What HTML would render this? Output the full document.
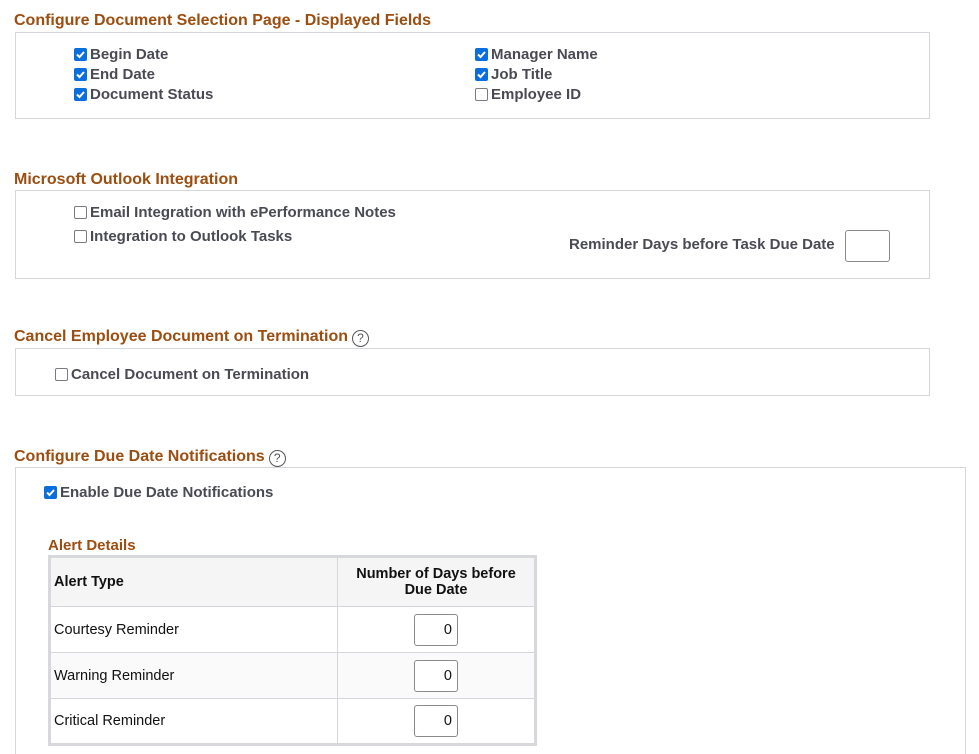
<!DOCTYPE html>
<html style="width:979px;height:754px;overflow:hidden"><head><meta charset="utf-8"><style>
*{box-sizing:border-box;margin:0;padding:0}
body{width:979px;height:754px;background:#fff;position:relative;overflow:hidden;font-family:"Liberation Sans",Arial,sans-serif}
.a{position:absolute}
.h{position:absolute;font-size:16px;font-weight:bold;color:#9c4d10;white-space:nowrap;line-height:18px}
.box{position:absolute;border:1px solid #d3d6da}
.lbl{position:absolute;font-size:15px;font-weight:bold;color:#4a4a55;white-space:nowrap;line-height:16px;padding-left:16px}
.cb{position:absolute;left:0;top:1px;width:13px;height:13px;border-radius:2px}
.on{background:#0a6fdc}
.off{border:1.5px solid #7a7a80;background:#fff}
.on svg{position:absolute;left:1px;top:1px}
.help{display:inline-block;width:17px;height:17px;border:1.3px solid #555;border-radius:50%;font-size:12px;font-weight:normal;color:#555;text-align:center;line-height:15px;vertical-align:-1px;margin-left:4px}
table{position:absolute;left:48px;top:555px;border-collapse:collapse;border:3px solid #d6d8db;width:489px}
td,th{border:1px solid #d3d6da;font-size:14.5px;color:#111;height:46px}
th{background:#f5f5f5;height:50px}
td.l{padding-left:3px;text-align:left}
.inp{display:block;margin-left:76px;width:44px;height:32px;border:1px solid #8a8a8a;border-radius:3px;text-align:right;padding-right:5px;line-height:30px;font-size:14.5px;color:#111}
</style></head><body>
<div class="h" style="left:14px;top:12px">Configure Document Selection Page - Displayed Fields</div>
<div class="box" style="left:15px;top:32px;width:915px;height:87px"></div>
<div class="lbl" style="left:74px;top:47px"><span class="cb on"><svg width="11" height="11" viewBox="0 0 11 11"><path d="M2 5.5L4.5 8L9 3" stroke="#fff" stroke-width="2" fill="none"/></svg></span>Begin Date</div>
<div class="lbl" style="left:74px;top:67px"><span class="cb on"><svg width="11" height="11" viewBox="0 0 11 11"><path d="M2 5.5L4.5 8L9 3" stroke="#fff" stroke-width="2" fill="none"/></svg></span>End Date</div>
<div class="lbl" style="left:74px;top:87px"><span class="cb on"><svg width="11" height="11" viewBox="0 0 11 11"><path d="M2 5.5L4.5 8L9 3" stroke="#fff" stroke-width="2" fill="none"/></svg></span>Document Status</div>
<div class="lbl" style="left:475px;top:47px"><span class="cb on"><svg width="11" height="11" viewBox="0 0 11 11"><path d="M2 5.5L4.5 8L9 3" stroke="#fff" stroke-width="2" fill="none"/></svg></span>Manager Name</div>
<div class="lbl" style="left:475px;top:67px"><span class="cb on"><svg width="11" height="11" viewBox="0 0 11 11"><path d="M2 5.5L4.5 8L9 3" stroke="#fff" stroke-width="2" fill="none"/></svg></span>Job Title</div>
<div class="lbl" style="left:475px;top:87px"><span class="cb off"></span>Employee ID</div>

<div class="h" style="left:14px;top:171px">Microsoft Outlook Integration</div>
<div class="box" style="left:15px;top:190px;width:915px;height:89px"></div>
<div class="lbl" style="left:74px;top:205px"><span class="cb off"></span>Email Integration with ePerformance Notes</div>
<div class="lbl" style="left:74px;top:229px"><span class="cb off"></span>Integration to Outlook Tasks</div>
<div class="lbl" style="left:569px;top:237px;padding-left:0">Reminder Days before Task Due Date</div>
<div class="a" style="left:845px;top:230px;width:45px;height:32px;border:1px solid #8a8a8a;border-radius:3px"></div>

<div class="h" style="left:14px;top:328px">Cancel Employee Document on Termination<span class="help">?</span></div>
<div class="box" style="left:15px;top:348px;width:915px;height:48px"></div>
<div class="lbl" style="left:55px;top:367px"><span class="cb off"></span>Cancel Document on Termination</div>

<div class="h" style="left:14px;top:448px">Configure Due Date Notifications<span class="help">?</span></div>
<div class="box" style="left:15px;top:467px;width:951px;height:300px"></div>
<div class="lbl" style="left:44px;top:485px"><span class="cb on"><svg width="11" height="11" viewBox="0 0 11 11"><path d="M2 5.5L4.5 8L9 3" stroke="#fff" stroke-width="2" fill="none"/></svg></span>Enable Due Date Notifications</div>
<div class="h" style="left:48px;top:537px;font-size:15px">Alert Details</div>
<table>
<tr><th style="text-align:left;padding-left:3px;width:288px">Alert Type</th><th>Number of Days before<br>Due Date</th></tr>
<tr><td class="l">Courtesy Reminder</td><td><span class="inp">0</span></td></tr>
<tr style="background:#fafafa"><td class="l">Warning Reminder</td><td><span class="inp" style="background:#fff">0</span></td></tr>
<tr><td class="l">Critical Reminder</td><td><span class="inp">0</span></td></tr>
</table>
</body></html>
